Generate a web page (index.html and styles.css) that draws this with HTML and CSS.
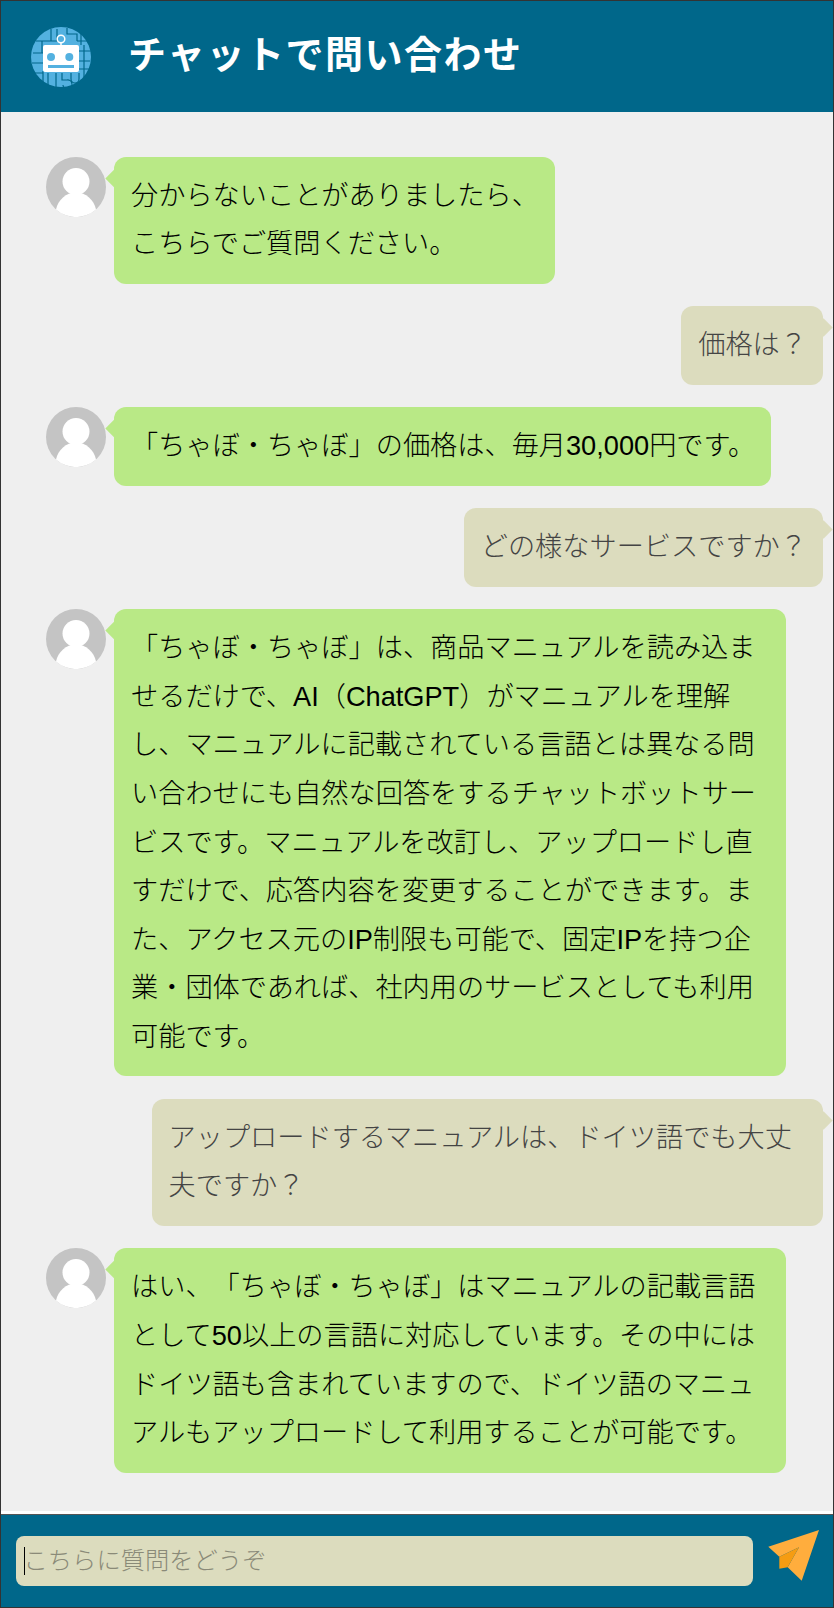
FILE: index.html

```html
<!DOCTYPE html>
<html lang="ja">
<head>
    <meta charset="UTF-8">
    <meta name="viewport" content="width=device-width, initial-scale=1.0">
    <title>チャットで問い合わせ</title>
    <link rel="stylesheet" href="styles.css">
</head>
<body>
    <div class="chat-window">
        <!-- ヘッダー -->
        <div class="chat-header">
            <svg class="bot-icon" viewBox="0 0 60 60" width="60" height="60">
                <circle cx="30" cy="30" r="30" fill="#53b1e0"/>
                <g fill="none" stroke="#00678a" stroke-width="1.200">
                    <path d="M5 14H26V2M20 2V14M11 14V26M2 26H12M1 36H12M36 1V7H46V14M46 14H58M50 5V18M48 24H60M53 18V50M48 34H59M48 42H58M12 44V58M4 46H12M17 46V59M25 46V60M31 46V53H36A4.500 4.500 0 1 1 32 58M40 46V52A4 4 0 0 0 48 52V46"/>
                </g>
                <rect x="12" y="18" width="36" height="27" rx="2" fill="#fff"/>
                <circle cx="30" cy="12" r="3.800" fill="#53b1e0" stroke="#fff" stroke-width="1.500"/>
                <path d="M30 15V19" stroke="#fff" stroke-width="1.500"/>
                <circle cx="20" cy="30" r="4" fill="#53b1e0"/>
                <circle cx="38.300" cy="30" r="4" fill="#53b1e0"/>
                <rect x="17" y="38" width="26" height="3" fill="#53b1e0"/>
            </svg>
            <h1>チャットで問い合わせ</h1>
        </div>

        <!-- メッセージ -->
        <div class="chat-body">
            <div class="msg bot">
                <svg class="avatar" viewBox="0 0 60 60" width="60" height="60">
                    <circle cx="30" cy="30" r="30" fill="#c4c4c4"/>
                    <circle cx="30" cy="24.500" r="13.500" fill="#fff"/>
                    <path d="M10 52.400C12 43 20 35.500 30 35.500S48 43 50 52.400A30 30 0 0 1 10 52.400Z" fill="#fff"/>
                </svg>
                <p class="bubble">分からないことがありましたら、<br>こちらでご質問ください。</p>
            </div>
            <div class="msg user">
                <p class="bubble">価格は？</p>
            </div>
            <div class="msg bot">
                <svg class="avatar" viewBox="0 0 60 60" width="60" height="60">
                    <circle cx="30" cy="30" r="30" fill="#c4c4c4"/>
                    <circle cx="30" cy="24.500" r="13.500" fill="#fff"/>
                    <path d="M10 52.400C12 43 20 35.500 30 35.500S48 43 50 52.400A30 30 0 0 1 10 52.400Z" fill="#fff"/>
                </svg>
                <p class="bubble">「ちゃぼ・ちゃぼ」の価格は、毎月30,000円です。</p>
            </div>
            <div class="msg user">
                <p class="bubble">どの様なサービスですか？</p>
            </div>
            <div class="msg bot">
                <svg class="avatar" viewBox="0 0 60 60" width="60" height="60">
                    <circle cx="30" cy="30" r="30" fill="#c4c4c4"/>
                    <circle cx="30" cy="24.500" r="13.500" fill="#fff"/>
                    <path d="M10 52.400C12 43 20 35.500 30 35.500S48 43 50 52.400A30 30 0 0 1 10 52.400Z" fill="#fff"/>
                </svg>
                <p class="bubble">「ちゃぼ・ちゃぼ」は、商品マニュアルを読み込ませるだけで、AI（ChatGPT）がマニュアルを理解し、マニュアルに記載されている言語とは異なる問い合わせにも自然な回答をするチャットボットサービスです。マニュアルを改訂し、アップロードし直すだけで、応答内容を変更することができます。また、アクセス元のIP制限も可能で、固定IPを持つ企業・団体であれば、社内用のサービスとしても利用可能です。</p>
            </div>
            <div class="msg user">
                <p class="bubble">アップロードするマニュアルは、ドイツ語でも大丈夫ですか？</p>
            </div>
            <div class="msg bot">
                <svg class="avatar" viewBox="0 0 60 60" width="60" height="60">
                    <circle cx="30" cy="30" r="30" fill="#c4c4c4"/>
                    <circle cx="30" cy="24.500" r="13.500" fill="#fff"/>
                    <path d="M10 52.400C12 43 20 35.500 30 35.500S48 43 50 52.400A30 30 0 0 1 10 52.400Z" fill="#fff"/>
                </svg>
                <p class="bubble">はい、「ちゃぼ・ちゃぼ」はマニュアルの記載言語として50以上の言語に対応しています。その中にはドイツ語も含まれていますので、ドイツ語のマニュアルもアップロードして利用することが可能です。</p>
            </div>
        </div>

        <!-- 入力欄 -->
        <div class="chat-footer">
            <div class="chat-input"><span class="caret"></span>こちらに質問をどうぞ</div>
            <svg class="send-icon" viewBox="0 0 52 52" width="52" height="52">
                <path d="M0.300 16.700L51 0L33.700 50.700L19.700 37.300L31 17.300L11.300 26.700Z" fill="#ffad3d"/>
                <path d="M11.300 26.700L31 17.300L19.700 37.300L11.300 38.700Z" fill="#f59c12"/>
            </svg>
        </div>
    </div>
</body>
</html>
```

FILE: styles.css

```css
body {
    margin: 0;
    font-family: "Liberation Sans", "Noto Sans CJK JP", sans-serif;
    background-color: #fff;
}

.chat-window {
    width: 834px;
    height: 1608px;
    box-sizing: border-box;
    border: 1px solid #333;
    display: flex;
    flex-direction: column;
}

.chat-header {
    height: 111px;
    background-color: #00678a;
    display: flex;
    align-items: center;
    padding-left: 30px;
    gap: 37px;
}

.chat-header h1 {
    margin: 0 0 10px;
    color: #fff;
    font-size: 38px;
    font-weight: bold;
    letter-spacing: 1.500px;
}

.chat-body {
    flex-grow: 1;
    background-color: #efefef;
    padding: 44.600px 10px 0 45px;
    display: flex;
    flex-direction: column;
    gap: 22.400px;
}

.msg {
    display: flex;
    align-items: flex-start;
}

.msg.user {
    justify-content: flex-end;
}

.avatar {
    flex-shrink: 0;
    margin-right: 8px;
}

.bubble {
    position: relative;
    margin: 0;
    max-width: 671.500px;
    box-sizing: border-box;
    padding: 15px 16px 15px 17px;
    border-radius: 12px;
    font-size: 27.200px;
    font-weight: 300;
    line-height: 48.600px;
    text-spacing-trim: space-all;
}

.msg.bot .bubble {
    background-color: #b9e986;
    color: #000;
}

.msg.user .bubble {
    background-color: #dcdcbe;
    color: #444;
}

/* 吹き出しの三角 */
.bubble::after {
    content: "";
    position: absolute;
    top: 15px;
    width: 13px;
    height: 13px;
    transform: rotate(45deg);
}

.msg.bot .bubble::after {
    left: -6.500px;
    background-color: #b9e986;
}

.msg.user .bubble::after {
    right: -6.500px;
    background-color: #dcdcbe;
}

.chat-footer {
    height: 92px;
    margin-top: 3px;
    border-top: 1px solid #555;
    background-color: #00678a;
    display: flex;
    align-items: center;
    padding: 0 13px 0 15px;
    gap: 15px;
}

.chat-input {
    flex-grow: 1;
    height: 50px;
    border-radius: 8px;
    background-color: #dcdcbe;
    color: #8a8a78;
    font-size: 24.300px;
    font-weight: 300;
    line-height: 50px;
    padding-left: 8px;
    display: flex;
    align-items: center;
}

.caret {
    width: 1px;
    height: 28px;
    margin-right: -1.500px;
    background-color: #000;
}

.send-icon {
    margin-bottom: 10px;
}
```
